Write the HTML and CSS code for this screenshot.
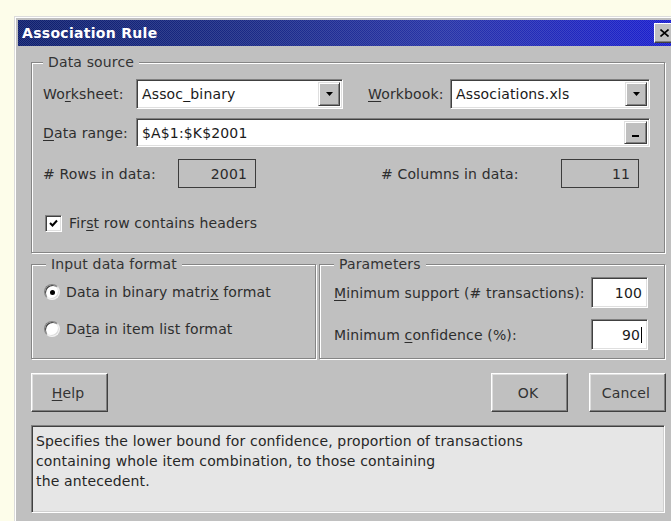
FILE: index.html
```html
<!DOCTYPE html>
<html lang="en">
<head>
<meta charset="utf-8">
<title>Association Rule</title>
<link rel="stylesheet" href="styles.css">
</head>
<body>
<div class="dialog">
  <div class="titlebar">
    <span class="title">Association Rule</span>
    <span class="close-btn">
      <svg width="9" height="8" viewBox="0 0 9 8"><path d="M0.5 0.5 L8.5 7.5 M8.5 0.5 L0.5 7.5" stroke="#000" stroke-width="1.6"/></svg>
    </span>
  </div>
  <div class="dlg-body">
    <fieldset class="group source">
      <legend>Data source</legend>
      <div class="row row-books">
        <span class="lbl lbl-sheet">Wo<u>r</u>ksheet:</span>
        <div class="field combo combo-sheet">
          <span class="val">Assoc_binary</span>
          <span class="drop"><svg width="7" height="4" viewBox="0 0 7 4"><path d="M0 0 H7 L3.5 4 Z" fill="#000"/></svg></span>
        </div>
        <span class="lbl lbl-book"><u>W</u>orkbook:</span>
        <div class="field combo combo-book">
          <span class="val">Associations.xls</span>
          <span class="drop"><svg width="7" height="4" viewBox="0 0 7 4"><path d="M0 0 H7 L3.5 4 Z" fill="#000"/></svg></span>
        </div>
      </div>
      <div class="row row-range">
        <span class="lbl lbl-sheet"><u>D</u>ata range:</span>
        <div class="field range">
          <span class="val">$A$1:$K$2001</span>
          <span class="drop pick"><span class="dash"></span></span>
        </div>
      </div>
      <div class="row row-counts">
        <span class="lbl lbl-rows"># Rows in data:</span>
        <span class="count">2001</span>
        <span class="lbl lbl-cols"># Columns in data:</span>
        <span class="count">11</span>
      </div>
      <div class="row row-check">
        <span class="checkbox">
          <svg width="9" height="9" viewBox="0 0 9 9"><path d="M1 4 L3.5 6.5 L8 1.5" fill="none" stroke="#000" stroke-width="2"/></svg>
        </span>
        <span class="lbl">Fir<u>s</u>t row contains headers</span>
      </div>
    </fieldset>

    <div class="pair">
      <fieldset class="group format">
        <legend>Input data format</legend>
        <div class="row radio-row">
          <span class="radio on"><span class="dot"></span></span>
          <span class="lbl">Data in binary matri<u>x</u> format</span>
        </div>
        <div class="row radio-row second">
          <span class="radio"></span>
          <span class="lbl">Da<u>t</u>a in item list format</span>
        </div>
      </fieldset>
      <fieldset class="group params">
        <legend>Parameters</legend>
        <div class="row param-row">
          <span class="lbl grow"><u>M</u>inimum support (# transactions):</span>
          <span class="field num">100</span>
        </div>
        <div class="row param-row second">
          <span class="lbl grow">Minimum <u>c</u>onfidence (%):</span>
          <span class="field num">90<span class="caret"></span></span>
        </div>
      </fieldset>
    </div>

    <div class="buttons">
      <span class="btn"><u>H</u>elp</span>
      <span class="spacer"></span>
      <span class="btn">OK</span>
      <span class="btn">Cancel</span>
    </div>

    <div class="desc">Specifies the lower bound for confidence, proportion of transactions<br>containing whole item combination, to those containing<br>the antecedent.</div>
  </div>
</div>
</body>
</html>
```

FILE: styles.css
```css
html, body {
  margin: 0;
  padding: 0;
  overflow: hidden;
}

body {
  width: 671px;
  height: 521px;
  background: #fdfdea;
  font-family: "DejaVu Sans", "Verdana", sans-serif;
  font-size: 14px;
  letter-spacing: 0.15px;
  color: #2b2b2b;
}

u {
  text-decoration-thickness: 1px;
  text-underline-offset: 2px;
}

/* window frame */
.dialog {
  margin: 16px 0 0 14px;
  width: 667px;
  height: 530px;
  box-sizing: border-box;
  background: #c0c0c0;
  border: 1px solid #dcdcdc;
  padding: 3px;
  box-shadow: inset 1px 1px 0 #ffffff;
}

.titlebar {
  height: 26px;
  display: flex;
  align-items: center;
  padding-left: 4px;
  background-color: #14248a;
  background-image:
    repeating-conic-gradient(rgba(255,255,255,0.12) 0 25%, rgba(0,0,0,0) 0 50%),
    linear-gradient(90deg, #0e1f6e 0%, #1a2a86 35%, #2834a8 65%, #1a1ed0 100%);
  background-size: 2px 2px, 100% 100%;
}

.title {
  color: #fff;
  font-weight: bold;
  font-size: 14px;
  letter-spacing: 0.3px;
}

.close-btn {
  margin-left: auto;
  margin-right: 2px;
  width: 21px;
  height: 20px;
  box-sizing: border-box;
  background: #c0c0c0;
  border-top: 1px solid #fff;
  border-left: 1px solid #fff;
  border-right: 1px solid #404040;
  border-bottom: 1px solid #404040;
  box-shadow: inset -1px -1px 0 #808080;
  display: flex;
  align-items: center;
  justify-content: center;
}

.dlg-body {
  padding: 8px 12px 0 13px;
}

/* etched group boxes */
.group {
  margin: 0;
  min-width: 0;
  border: 1px solid #858585;
  box-shadow: inset 1px 1px 0 #fff, 1px 1px 0 #fff;
}

.group legend {
  line-height: 16px;
  padding: 0 5px;
  background: #c0c0c0;
  color: #333;
}

.source {
  padding: 9px 13px 21px 11px;
}

.row {
  display: flex;
  align-items: center;
}

.lbl {
  white-space: nowrap;
  color: #2e2e2e;
}

.lbl-sheet {
  width: 93px;
  flex: none;
}

.lbl-book {
  width: 82px;
  margin-left: 25px;
  flex: none;
}

/* sunken white fields */
.field {
  box-sizing: border-box;
  background: #fff;
  border-top: 1px solid #808080;
  border-left: 1px solid #808080;
  border-right: 1px solid #fff;
  border-bottom: 1px solid #fff;
  box-shadow: inset 1px 1px 0 #404040, inset -1px -1px 0 #dfdfdf;
  color: #1a1a1a;
}

.combo {
  height: 30px;
  display: flex;
  align-items: stretch;
  padding: 2px;
}

.combo .val, .range .val {
  flex: 1;
  display: flex;
  align-items: center;
  padding-left: 3px;
}

.combo-sheet { width: 207px; }
.combo-book { width: 200px; }

.drop {
  width: 22px;
  box-sizing: border-box;
  background: #c0c0c0;
  border-top: 1px solid #dfdfdf;
  border-left: 1px solid #dfdfdf;
  border-right: 1px solid #404040;
  border-bottom: 1px solid #404040;
  box-shadow: inset 1px 1px 0 #fff, inset -1px -1px 0 #808080;
  display: flex;
  align-items: center;
  justify-content: center;
}

.row-range {
  margin-top: 9px;
}

.range {
  width: 514px;
  height: 29px;
  display: flex;
  padding: 2px;
}

.pick {
  width: 23px;
  align-items: flex-end;
  padding-bottom: 6px;
}

.dash {
  width: 7px;
  height: 2px;
  background: #000;
}

.row-counts {
  margin-top: 12px;
}

.lbl-rows { width: 135px; flex: none; }
.lbl-cols { width: 180px; margin-left: 125px; flex: none; }

.count {
  width: 78px;
  height: 29px;
  box-sizing: border-box;
  border: 1px solid #3c3c3c;
  display: flex;
  align-items: center;
  justify-content: flex-end;
  padding-right: 8px;
  color: #2a2a2a;
}

.row-check {
  margin-top: 27px;
  height: 16px;
}

.checkbox {
  width: 17px;
  height: 17px;
  margin-left: 2px;
  margin-right: 7px;
  box-sizing: border-box;
  background: #fff;
  border-top: 1px solid #808080;
  border-left: 1px solid #808080;
  border-right: 1px solid #fff;
  border-bottom: 1px solid #fff;
  box-shadow: inset 1px 1px 0 #404040, inset -1px -1px 0 #dfdfdf;
  display: flex;
  align-items: center;
  justify-content: center;
}

/* lower pair of groups */
.pair {
  display: flex;
  gap: 3px;
  margin-top: 3px;
}

.format {
  width: 285px;
  box-sizing: border-box;
  padding: 12px 8px 21px 12px;
}

.format legend {
  margin-left: 2px;
}

.params {
  flex: 1;
  box-sizing: border-box;
  padding: 5px 16px 8px 14px;
}

.radio-row {
  height: 16px;
}

.radio-row.second {
  margin-top: 21px;
}

.radio {
  width: 16px;
  height: 16px;
  box-sizing: border-box;
  border-radius: 50%;
  background: #fff;
  border: 1px solid;
  border-color: #808080 #f0f0f0 #f0f0f0 #808080;
  box-shadow: inset 1px 1px 0 #404040, inset -1px -1px 0 #dcdcdc;
  margin-right: 6px;
  display: flex;
  align-items: center;
  justify-content: center;
}

.dot {
  width: 5px;
  height: 5px;
  border-radius: 50%;
  background: #000;
}

.grow {
  flex: 1;
}

.num {
  width: 57px;
  height: 31px;
  display: flex;
  align-items: center;
  justify-content: flex-end;
  padding-right: 5px;
}

.param-row.second {
  margin-top: 11px;
}

.caret {
  width: 1px;
  height: 16px;
  background: #000;
  margin-left: 1px;
}

/* push buttons */
.buttons {
  display: flex;
  margin-top: 14px;
  margin-right: -1px;
  gap: 21px;
}

.spacer {
  flex: 1;
}

.btn {
  width: 77px;
  height: 39px;
  box-sizing: border-box;
  background: #c0c0c0;
  border-top: 1px solid #fff;
  border-left: 1px solid #fff;
  border-right: 1px solid #404040;
  border-bottom: 1px solid #404040;
  box-shadow: inset -1px -1px 0 #808080, inset 1px 1px 0 #dfdfdf;
  display: flex;
  align-items: center;
  justify-content: center;
  padding-right: 3px;
  color: #333;
}

.desc {
  margin-top: 13px;
  height: 88px;
  box-sizing: border-box;
  background: #e6e6e6;
  border-top: 1px solid #808080;
  border-left: 1px solid #808080;
  border-right: 1px solid #fff;
  border-bottom: 1px solid #fff;
  box-shadow: inset 1px 1px 0 #404040, inset -1px -1px 0 #d0d0d0;
  padding: 5px 4px 3px;
  line-height: 20px;
  color: #262626;
}
```
